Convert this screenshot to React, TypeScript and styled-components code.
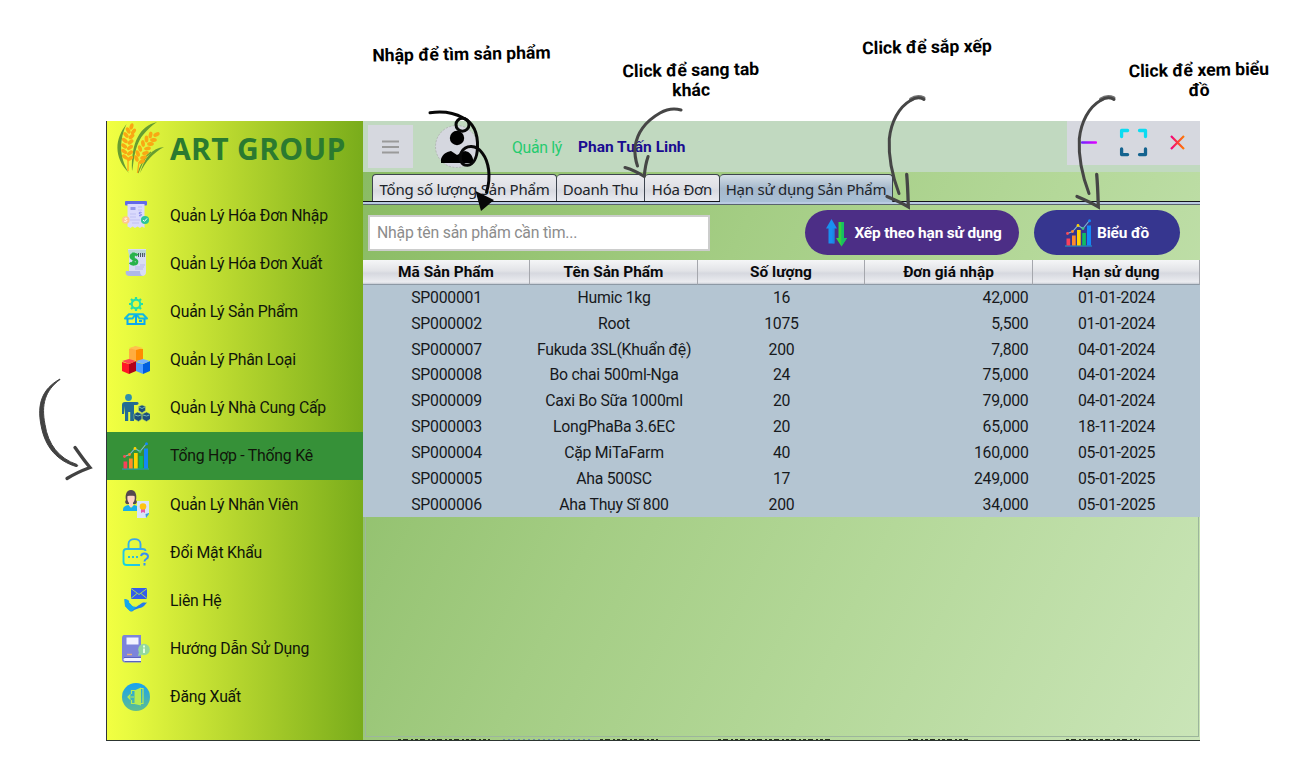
import React from "react";
import styled, { createGlobalStyle } from "styled-components";

const GlobalStyle = createGlobalStyle`
  * { box-sizing: border-box; }
  body { margin: 0; background: #fff; font-family: Roboto, "Liberation Sans", sans-serif; overflow: hidden; }
`;

const Page = styled.div`
  position: relative;
  width: 1300px;
  height: 760px;
  padding: 121px 100px 19px 106px;
  background: #fff;
`;

const Window = styled.div`
  display: flex;
  width: 1094px;
  height: 620px;
  border-left: 1px solid #30343a;
  border-bottom: 1px solid #2c3530;
`;

const Sidebar = styled.aside`
  width: 256px;
  flex: none;
  background: linear-gradient(90deg, #f2ff42 0%, #e9fb40 8%, #b6d62e 50%, #79ac1b 100%);
`;

const Brand = styled.div`
  display: flex;
  align-items: center;
  height: 70px;
  padding: 0 0 16px 9px;
  gap: 6px;
`;

const BrandName = styled.span`
  font: 700 30px/40px "Open Sans", "Noto Sans", sans-serif;
  color: #2b7a30;
  white-space: nowrap;
  padding-top: 1px;
  letter-spacing: 0.35px;
`;

const NavItem = styled.div<{ $active?: boolean }>`
  display: flex;
  align-items: center;
  height: 48.18px;
  padding-left: 15px;
  gap: 20px;
  font-size: 15.8px;
  letter-spacing: -0.22px;
  color: #10150a;
  white-space: nowrap;
  background: ${(p) => (p.$active ? "#369138" : "transparent")};
`;

const Main = styled.main`
  display: flex;
  flex-direction: column;
  width: 837px;
  background: linear-gradient(116deg, #88ba61 0%, #a4cd84 38%, #b4d899 64%, #cae5b8 100%);
`;

const TopBar = styled.header`
  display: flex;
  align-items: flex-start;
  height: 51px;
  flex: none;
  padding-left: 5px;
  background: #c1d9c0;
`;

const MenuButton = styled.button`
  display: flex;
  align-items: center;
  justify-content: center;
  width: 45px;
  height: 43px;
  margin: 4px 22px 0 0;
  border: 0;
  padding: 0;
  background: #d6d8df;
`;

const AvatarSlot = styled.div`
  width: 43px;
  height: 43px;
  margin-top: 4px;
`;

const Role = styled.span`
  width: 66px;
  margin-left: 34px;
  font-size: 15.8px;
  letter-spacing: -0.3px;
  line-height: 53px;
  color: #25cb6f;
`;

const UserName = styled.span`
  flex: 1;
  font-size: 15.5px;
  font-weight: 700;
  line-height: 53px;
  color: #1a0c91;
`;

const WindowControls = styled.div`
  display: flex;
  width: 133px;
  height: 44px;
  background: #d6d8df;
`;

const TabStrip = styled.div`
  display: flex;
  align-items: flex-end;
  height: 33px;
  flex: none;
  padding: 0 0 3px 9px;
  border-bottom: 1px solid #59636c;
  background: linear-gradient(0deg, #b9cbe2 0 2px, #11131a 2px 3px, transparent 3px);
`;

const Tab = styled.div<{ $w: number; $active?: boolean }>`
  width: ${(p) => p.$w}px;
  height: ${(p) => (p.$active ? 28 : 27)}px;
  margin-bottom: ${(p) => (p.$active ? -1 : 0)}px;
  border: 1px solid #3d444e;
  border-left-width: 0;
  border-bottom-width: 0;
  border-radius: 4px 4px 0 0;
  text-align: center;
  font: 400 15px/28px "Noto Sans", sans-serif;
  letter-spacing: -0.24px;
  color: #20242a;
  white-space: nowrap;
  background: ${(p) =>
    p.$active
      ? "linear-gradient(#d3dee6 0%, #a5b8cb 50%, #a9c0d6 100%)"
      : "linear-gradient(#ebebef 0%, #dfe0e5 50%, #d8dae1 60%, #e9eaf0 100%)"};
  &:first-child { border-left-width: 1px; }
`;

const Toolbar = styled.div`
  display: flex;
  align-items: center;
  height: 55px;
  flex: none;
  padding-left: 5px;
`;

const SearchBox = styled.div`
  width: 342px;
  height: 36px;
  margin: 0 95px 0 0;
  padding-left: 7px;
  border: 2px solid #cccdcc;
  background: #fff;
  color: #8c8c8c;
  font-size: 15.8px;
  letter-spacing: -0.2px;
  line-height: 32px;
`;

const PillButton = styled.button<{ $w: number; $bg: string }>`
  display: flex;
  align-items: center;
  justify-content: center;
  gap: 4px;
  width: ${(p) => p.$w}px;
  height: 45px;
  margin-right: 15px;
  padding: 0;
  border: 0;
  border-radius: 23px;
  background: ${(p) => p.$bg};
  color: #fff;
  font: 700 15.4px Roboto, sans-serif;
  letter-spacing: -0.15px;
  white-space: nowrap;
`;

const Grid = styled.div`
  display: grid;
  grid-template-columns: 167px 168px 167px 168px 167px;
`;

const HeadCell = styled.div`
  height: 25px;
  border-right: 1px solid #a5a7ad;
  border-bottom: 1px solid #8d99a5;
  background: linear-gradient(#f5f6f7 0%, #e2e3e7 45%, #d6d8df 55%, #ebecf0 92%, #c5cad2 100%);
  text-align: center;
  font-size: 15.4px;
  font-weight: 700;
  line-height: 24px;
  color: #08090b;
`;

const Cell = styled.div<{ $right?: boolean }>`
  height: 25.84px;
  padding-right: ${(p) => (p.$right ? "4.5px" : "0")};
  background: #b4c5d2;
  text-align: ${(p) => (p.$right ? "right" : "center")};
  font-size: 15.8px;
  letter-spacing: -0.26px;
  line-height: 25.5px;
  color: #17191c;
  white-space: nowrap;
`;

const EmptyArea = styled.div`
  flex: 1;
  margin: 0 1px 0 2px;
  border: 1px solid #9cb69c;
  border-top: 0;
`;

const Residue = styled.svg`
  display: block;
  flex: none;
  margin-top: 1px;
`;

const Callout = styled.div<{ $x: number; $y: number; $w: number }>`
  position: absolute;
  left: ${(p) => p.$x}px;
  top: ${(p) => p.$y}px;
  width: ${(p) => p.$w}px;
  transform: rotate(-1deg);
  text-align: center;
  font-size: 17.6px;
  font-weight: 700;
  line-height: 20px;
  color: #000;
  white-space: pre-line;
`;

const Overlay = styled.svg`
  position: absolute;
  left: 0;
  top: 0;
  pointer-events: none;
`;

const Svg = ({ children, size = 28 }: { children: React.ReactNode; size?: number }) => (
  <svg width={size} height={size} viewBox="0 0 28 28" fill="none">
    {children}
  </svg>
);

const grains = (points: number[][]) =>
  points.map(([x, y, r], i) => (
    <ellipse key={i} cx={x} cy={y} rx="3.4" ry="1.9" fill="#f9a814" transform={`rotate(${r} ${x} ${y})`} />
  ));

const Wheat = () => (
  <svg width="48" height="52" viewBox="0 0 48 52" fill="none">
    <path d="M10.500 2C-2 18-2 36 13 51 3 36 3 18 10.500 2Z" fill="#679d31" />
    <path d="M41 0C24 4 15 20 16 49c1.500-1 1-24 11-36C31 8 35 4 41 0Z" fill="#679d31" />
    <path d="M48 25C36 26 29 35 24 51c6-12 13-20 24-26Z" fill="#679d31" />
    <path d="M35 30C29 34 26 41 22 51" stroke="#679d31" strokeWidth="1.200" />
    <path d="M12 49V38M21.500 51l1.500-11" stroke="#f9a814" strokeWidth="1.300" />
    {grains([
      [15.500, 4.500, -75], [12.200, 8.500, -120], [17.500, 9.500, -55], [10, 13, -130], [15.500, 14.500, -42], [8.800, 18.500, -140],
      [14.500, 20, -38], [8.200, 24, -142], [14, 25.500, -35], [8.200, 29.500, -145], [14, 31, -35], [9, 35, -145], [14, 36.500, -35],
      [40.500, 12.500, -28], [34.500, 13, -80], [37.500, 18, -5], [30.500, 17, -92], [34.500, 22, -5], [27, 21.500, -98], [31.500, 26.500, -10],
      [24, 26.500, -105], [29.500, 31, -15], [21.800, 31.500, -110], [27.500, 35.500, -20], [20.500, 36.500, -112], [26, 39.500, -28],
    ])}
  </svg>
);

const ReceiptIcon = () => (
  <Svg>
    <rect x="3" width="22" height="4.5" rx="1" fill="#6269e8" />
    <path d="M5.5 3h17v24l-2.500-1.500-2 1.500-2.500-1.500L13 27l-2.500-1.500-2 1.500-3-1.500Z" fill="#dadafd" />
    <path d="M8.500 6h5v3h-5z" fill="#9295ed" />
    <path d="M16 6h4M16 9h4M8 13h6M8 16h6M8 19h10M10 22h7" stroke="#c0c0f3" />
    <path d="M19.500 11.500c-3-1-3 1.500-1.200 1.500 2.200.2 1.200 2.500-1.300 1.600" stroke="#777be6" />
    <circle cx="3.800" cy="19" r="3.800" fill="#ffc78b" />
    <path d="M5.200 17.500c-3-1-3 1-1.400 1.300 2 .4 1 2.400-1.600 1.500" stroke="#fff" strokeWidth=".8" />
    <circle cx="23" cy="19" r="4.100" fill="#2dc497" />
    <path d="m21 19 1.400 1.400 2.700-3" stroke="#fff" />
  </Svg>
);

const BillIcon = () => (
  <Svg>
    <path d="M6 0h18v23a4 4 0 0 1-4 4H7V5Z" fill="#d8dcf5" />
    <path d="M6 1h18v5H7Z" fill="#bcd8d5" />
    <path d="M4 22h14c0 3 1 4.500 3 5H7c-3 0-4-3-3-5Z" fill="#aeb8e8" />
    <path d="M16.500 4v4M18.500 4v4M20.500 4v4M22.300 4v4" stroke="#4a5664" />
    <path d="M13 18h9M13 20h8M18 16h5" stroke="#bdb8ec" />
    <path d="M15.500 6.500C13 4 8.500 5 9 8c.5 3 6 1.500 6 4.500 0 3.500-5.500 3.500-7 1M11.500 3.500v12.500" stroke="#28b34a" strokeWidth="2.700" />
  </Svg>
);

const ProductIcon = () => (
  <Svg>
    <g stroke="#25dfa8" strokeWidth="2.200">
      <circle cx="14" cy="7" r="4.300" />
      <path d="M14 0v3M14 11v3M7 7h3M18 7h3M9 2l2 2M17 10l2 2M9 12l2-2M17 4l2-2" />
    </g>
    <path d="M13.500 17.300H7L3 21.500h7.500l3-4.200h1l3 4.200H25l-4-4.200h-6.500" stroke="#12b9e0" strokeWidth="2" strokeLinejoin="round" />
    <path d="M5.500 22v5h17v-5M14 18v9M17 24h3" stroke="#0ba7f0" strokeWidth="2" />
  </Svg>
);

const CubesIcon = () => (
  <Svg>
    <path d="m7 3 7-3v14l-7 2Z" fill="#ffad3f" />
    <path d="m14 2 7 1v11l-7 2Z" fill="#ff8c00" />
    <path d="m7 2 7-2 7 2-7 2Z" fill="#ffc24d" />
    <path d="m0 16 7 2v10l-7-3Z" fill="#ff1826" />
    <path d="m14 15-7 3v10l7-3Z" fill="#b10319" />
    <path d="m0 15 7-2 7 2-7 3Z" fill="#ff4750" />
    <path d="m14 16 7 2v10l-7-3Z" fill="#4f9dff" />
    <path d="m28 15-7 3v10l7-3Z" fill="#005fdf" />
    <path d="m14 15 7-2 7 2-7 3Z" fill="#78b4ff" />
  </Svg>
);

const SupplierIcon = () => (
  <Svg>
    <circle cx="6.500" cy="3.500" r="3.400" fill="#2e8fad" />
    <path d="M3 8h11c2 0 3 .5 2.500 1.800S15 11 12 11v16H8.200v-9h-2v9H3V12L2 20H0V11c0-2 1-3 3-3Z" fill="#236b93" />
    <g fill="#1d4e7c" stroke="#b6dc63" strokeWidth=".6">
      <path d="m20 11 3.500 1.500v4L20 19l-3.500-2.500v-4ZM15.500 18l4.500 2v5l-3.500 2.500L12 25v-5ZM24.500 18l4 2v5L24.500 27.500 20 25v-5Z" />
    </g>
    <path d="m17 13 3 1.500 3-1.500M13 21l3 1 3-1M21 21l3.500 1 3-1" stroke="#72b5b0" />
  </Svg>
);

const ChartIcon = () => (
  <Svg>
    <path d="M0 27h27" stroke="#1da4cf" />
    <path d="M1.500 19.500h3.700v7H1.500z" fill="#f9415b" />
    <path d="M7 16.500h3.700v10H7z" fill="#ff8b2b" />
    <path d="M12 11h3.700v15.500H12z" fill="#ffd400" />
    <path d="M17.200 14h3.700v12.500h-3.700z" fill="#10bd62" />
    <path d="M22 6.500h4v20h-4z" fill="#1387f8" />
    <path d="m2.500 14.500 5-2 5.500-6 5 3L24.500 1.500" stroke="#80b9d0" strokeWidth="1.100" />
    <circle cx="2.500" cy="14.500" r="1.400" fill="#fc4c55" />
    <circle cx="7.500" cy="12.500" r="1.400" fill="#ff8b2b" />
    <circle cx="13" cy="6.500" r="1.400" fill="#ffd400" />
    <circle cx="18" cy="9.500" r="1.400" fill="#44c184" />
    <circle cx="24.500" cy="1.800" r="1.500" fill="#1387f8" />
  </Svg>
);

const StaffIcon = () => (
  <Svg>
    <path d="M4 10c-1-4 0-10 5-10s6 6 5 10c2 2 0 5-2 4H6c-2 1-4-2-2-4Z" fill="#55484e" />
    <path d="M5.500 6c3-.5 5-.5 7 0 1 4-1 6-1.500 7v4H7v-4C5.500 11 5 9 5.500 6Z" fill="#ffd4c4" />
    <path d="M1 21c0-4 1-5 5.500-6l2.500 3 3-3c4 1 5 2 5 6Z" fill="#18aee9" />
    <path d="M15 11h12v13l-3 4h-9Z" fill="#d9e4fb" />
    <path d="M19 18h4v5l-2-1-2 1Z" fill="#e657aa" />
    <circle cx="21" cy="16.500" r="3.300" fill="#ffc411" />
    <path d="M27 23v1l-3 4-.5-4Z" fill="#3b9ddc" />
  </Svg>
);

const PasswordIcon = () => (
  <Svg>
    <defs>
      <linearGradient id="lock" gradientUnits="userSpaceOnUse" x1="1" y1="27" x2="24" y2="3">
        <stop stopColor="#12d8e0" />
        <stop offset="1" stopColor="#4598ee" />
      </linearGradient>
    </defs>
    <g stroke="url(#lock)" strokeWidth="1.900">
      <path d="M18 27H4.500C2.500 27 1.500 26 1.500 24V14c0-2 1-3 3-3h16c2 0 3 1 3 2M6.500 11V6c0-6.500 12-6.500 12 0v5" />
      <path d="M6 19h2M10 19h2M14 19h2" strokeWidth="2" />
    </g>
    <path d="M19 18c1-4 7-3 7 .5 0 3-3.500 2-3.500 5M22.500 25v2.500" stroke="#388ff6" strokeWidth="2" />
  </Svg>
);

const ContactIcon = () => (
  <Svg>
    <path d="M9 2h16v11H9z" fill="#345cec" />
    <path d="m9 2.500 8 6 8-6M9 12.500l6-5M25 12.500l-6-5" stroke="#a6d95a" strokeWidth="1" />
    <path d="M2.500 13 6 14l4 6 4 1c2-1 4-3 6-4 2-1 3 0 5-.5L22 20c-4 3-8 2-11 5-2 1-3 .5-4-1l-4-4Z" fill="#247bec" />
    <path d="M2.500 13 6 14l4 6 4 1-4 4c-2 .5-3-.5-7-5Z" fill="#14a9ed" />
    <path d="m7 16 4 4h3l5-3" stroke="#d7ed4e" strokeWidth=".9" />
  </Svg>
);

const GuideIcon = () => (
  <Svg>
    <path d="M2 0h17v24H3v2h16v1.500H3C1 27.500 0 26 0 24V3C0 1 1 0 2 0Z" fill="#7c84db" />
    <path d="M3 23h16v3H3c-2 0-2-3 0-3Z" fill="#f1f2ff" />
    <path d="M2 22.500h17M3 26.500h16" stroke="#5861c2" />
    <path d="M4.500 2.500h12v7h-12z" fill="#f1f2ff" />
    <path d="M5 19.500h5" stroke="#e5b17d" strokeWidth="1.500" />
    <circle cx="22" cy="14.500" r="5.800" fill="#94d89d" />
    <path d="m17 17-1 4 4-1Z" fill="#94d89d" />
    <path d="M22 13.500V18M22 10.500v2" stroke="#e1ffe3" strokeWidth="2" />
  </Svg>
);

const LogoutIcon = () => (
  <Svg>
    <defs>
      <linearGradient id="exit" x1="0" y1="0" x2="0" y2="1">
        <stop stopColor="#16a2f3" />
        <stop offset="1" stopColor="#60bd8e" />
      </linearGradient>
    </defs>
    <circle cx="14" cy="14" r="14" fill="url(#exit)" />
    <path d="m12.500 7.500 6.500-3v18l-6.500-1.500Z" fill="#b8ec50" />
    <path d="M18 5.500h3v15h-2M13 7.500H9.500V11M13 20.500H9.500V17M6 14h6M8.500 11.500l-2.500 2.500 2.500 2.500" stroke="#b8ec50" strokeWidth="1.200" />
  </Svg>
);

const SortIcon = () => (
  <Svg>
    <path d="M9.500 0 15 9.500h-2.500V24.500H6.500V9.500H4Z" fill="#1990f0" />
    <path d="M16.500 3h5.500v16h3l-5.500 8.500L14 19h2.500Z" fill="#35d43c" />
    <path d="M19.300 3H22v16h3l-5.700 8.500Z" fill="#17bf62" />
    <path d="M10.500 9.500h2v15h-2Z" fill="#1e80d8" opacity=".6" />
  </Svg>
);

const Avatar = () => (
  <svg width="43" height="43" viewBox="0 0 43 43">
    <circle cx="21.500" cy="21.500" r="21" fill="#d5d7df" stroke="#aaa" strokeWidth=".7" strokeDasharray="2 1.500" />
    <circle cx="22" cy="13" r="7.200" />
    <path d="M6 38v-4c2-5 5-7 10-8l6 4 8-4c5 1 7 4 8 8v4Z" />
  </svg>
);

const MinimizeIcon = () => (
  <svg width="44" height="44" viewBox="0 0 44 44">
    <defs>
      <linearGradient id="min">
        <stop stopColor="#6a22ff" />
        <stop offset="1" stopColor="#e700ff" />
      </linearGradient>
    </defs>
    <rect x="14" y="20.300" width="16" height="2.400" rx="1" fill="url(#min)" />
  </svg>
);

const ExpandIcon = () => (
  <svg width="44" height="44" viewBox="0 0 44 44" fill="none" strokeWidth="3.300" strokeLinejoin="round" strokeLinecap="round">
    <path d="M10.600 15.500V9.500h6M28.500 9.500h6v6" stroke="#0bdcf2" />
    <path d="M10.600 28v5.600h6M28.500 33.600h6V28" stroke="#14638f" />
  </svg>
);

const CloseIcon = () => (
  <svg width="44" height="44" viewBox="0 0 44 44" fill="none">
    <defs>
      <linearGradient id="close">
        <stop stopColor="#f4007d" />
        <stop offset="1" stopColor="#ff7b00" />
      </linearGradient>
    </defs>
    <path d="m16 15 13 13m0-13-13 13" stroke="url(#close)" strokeWidth="2.200" />
  </svg>
);

const nav: { label: string; Icon: () => React.ReactElement; active?: boolean }[] = [
  { label: "Quản Lý Hóa Đơn Nhập", Icon: ReceiptIcon },
  { label: "Quản Lý Hóa Đơn Xuất", Icon: BillIcon },
  { label: "Quản Lý Sản Phẩm", Icon: ProductIcon },
  { label: "Quản Lý Phân Loại", Icon: CubesIcon },
  { label: "Quản Lý Nhà Cung Cấp", Icon: SupplierIcon },
  { label: "Tổng Hợp - Thống Kê", Icon: ChartIcon, active: true },
  { label: "Quản Lý Nhân Viên", Icon: StaffIcon },
  { label: "Đổi Mật Khẩu", Icon: PasswordIcon },
  { label: "Liên Hệ", Icon: ContactIcon },
  { label: "Hướng Dẫn Sử Dụng", Icon: GuideIcon },
  { label: "Đăng Xuất", Icon: LogoutIcon },
];

const columns = ["Mã Sản Phẩm", "Tên Sản Phẩm", "Số lượng", "Đơn giá nhập", "Hạn sử dụng"];

const rows = [
  ["SP000001", "Humic 1kg", "16", "42,000", "01-01-2024"],
  ["SP000002", "Root", "1075", "5,500", "01-01-2024"],
  ["SP000007", "Fukuda 3SL(Khuẩn đệ)", "200", "7,800", "04-01-2024"],
  ["SP000008", "Bo chai 500ml-Nga", "24", "75,000", "04-01-2024"],
  ["SP000009", "Caxi Bo Sữa 1000ml", "20", "79,000", "04-01-2024"],
  ["SP000003", "LongPhaBa 3.6EC", "20", "65,000", "18-11-2024"],
  ["SP000004", "Cặp MiTaFarm", "40", "160,000", "05-01-2025"],
  ["SP000005", "Aha 500SC", "17", "249,000", "05-01-2025"],
  ["SP000006", "Aha Thụy Sĩ 800", "200", "34,000", "05-01-2025"],
];

const BrushArrow = ({ dx = 0 }: { dx?: number }) => (
  <g transform={`translate(${dx} 0)`} fill="none" stroke="#464646" strokeLinecap="round">
    <path d="M924 99.500c-3-2-8-2.500-13.500 1C899 107 891 122 889.300 139c-1 19 2.700 36 9.700 54.500" strokeWidth="3" />
    <path d="M923.500 98c-4-1.500-9-1-12.500 1.500" strokeWidth="4" opacity=".75" />
    <path d="M887 196.500c7 3 14 6 21.300 10.300-.3-10-.5-20-1.600-32.500" strokeWidth="3.300" />
  </g>
);

export default function App() {
  return (
    <Page>
      <GlobalStyle />
      <Window>
        <Sidebar>
          <Brand>
            <Wheat />
            <BrandName>ART GROUP</BrandName>
          </Brand>
          {nav.map(({ label, Icon, active }) => (
            <NavItem key={label} $active={active}>
              <Icon />
              {label}
            </NavItem>
          ))}
        </Sidebar>
        <Main>
          <TopBar>
            <MenuButton>
              <svg width="17" height="14" viewBox="0 0 17 14" stroke="#9a9a9a" strokeWidth="1.900">
                <path d="M0 1.500h17M0 7h17M0 12.500h17" />
              </svg>
            </MenuButton>
            <AvatarSlot>
              <Avatar />
            </AvatarSlot>
            <Role>Quản lý</Role>
            <UserName>Phan Tuấn Linh</UserName>
            <WindowControls>
              <MinimizeIcon />
              <ExpandIcon />
              <CloseIcon />
            </WindowControls>
          </TopBar>
          <TabStrip>
            <Tab $w={185}>Tổng số lượng Sản Phẩm</Tab>
            <Tab $w={88}>Doanh Thu</Tab>
            <Tab $w={75}>Hóa Đơn</Tab>
            <Tab $w={173} $active>Hạn sử dụng Sản Phẩm</Tab>
          </TabStrip>
          <Toolbar>
            <SearchBox>Nhập tên sản phẩm cần tìm...</SearchBox>
            <PillButton $w={214} $bg="#4c2e86">
              <SortIcon />
              Xếp theo hạn sử dụng
            </PillButton>
            <PillButton $w={146} $bg="#36368f">
              <ChartIcon />
              Biểu đồ
            </PillButton>
          </Toolbar>
          <Grid>
            {columns.map((c) => (
              <HeadCell key={c}>{c}</HeadCell>
            ))}
            {rows.map((r) =>
              r.map((v, i) => (
                <Cell key={r[0] + i} $right={i === 3}>
                  {v}
                </Cell>
              ))
            )}
          </Grid>
          <EmptyArea />
          <Residue width="837" height="2" viewBox="0 0 837 2">
            <path
              d="M35 1.500h92M237 1.500h58M355 1.500h112M545 1.500h60M703 1.500h74"
              stroke="#26331f"
              strokeWidth="1.200"
              strokeDasharray="3 2 5 3 2 2"
            />
            <path d="M140 1.500h90" stroke="#6c8ca8" strokeDasharray="2 3" />
          </Residue>
        </Main>
      </Window>

      <Callout $x={361} $y={44} $w={201}>Nhập để tìm sản phẩm</Callout>
      <Callout $x={601} $y={60} $w={180}>{"Click để sang tab\nkhác"}</Callout>
      <Callout $x={837} $y={37} $w={180}>Click để sắp xếp</Callout>
      <Callout $x={1109} $y={60} $w={180}>{"Click để xem biểu\nđồ"}</Callout>

      <Overlay width="1300" height="760" viewBox="0 0 1300 760" fill="none">
        <g stroke="#080808" strokeWidth="3" strokeLinecap="round">
          <path d="M430 112.800c12-1.800 24 0 33 5 11 5 15 17 14.500 30-.5 10-4 17-10 17.500-7 0-9-8-6-13 4-8 15-8 21 1 6 8 9 23 4 39" />
          <circle cx="462.500" cy="124.700" r="6.500" />
        </g>
        <path d="M475.500 191 494 200l-13 11Z" fill="#080808" />
        <g stroke="#464646" strokeWidth="3.100" strokeLinecap="round" strokeLinejoin="round">
          <path d="M681 110c-7-2-14-1-21 3-14 8-23 20-25 34-.5 7 .5 13 2.500 19" />
          <path d="M625 167.500c7 2 13 5 19.300 9 .5-7 1-12 3.800-20" />
        </g>
        <BrushArrow />
        <BrushArrow dx={190} />
        <path
          d="M60 379c-18 10-23 25-19 46 4 23 17 36 35 41.500 2 .5 2-1.500 1-2-18-6-29-20-32-40-4-20 0-34 15-45Z"
          fill="#424242"
          stroke="#424242"
          strokeWidth="1"
        />
        <path d="M75 447.500c5 7 9 13 15 20-8 3-15 6-23 11" stroke="#424242" strokeWidth="3.300" strokeLinecap="round" />
      </Overlay>
    </Page>
  );
}
